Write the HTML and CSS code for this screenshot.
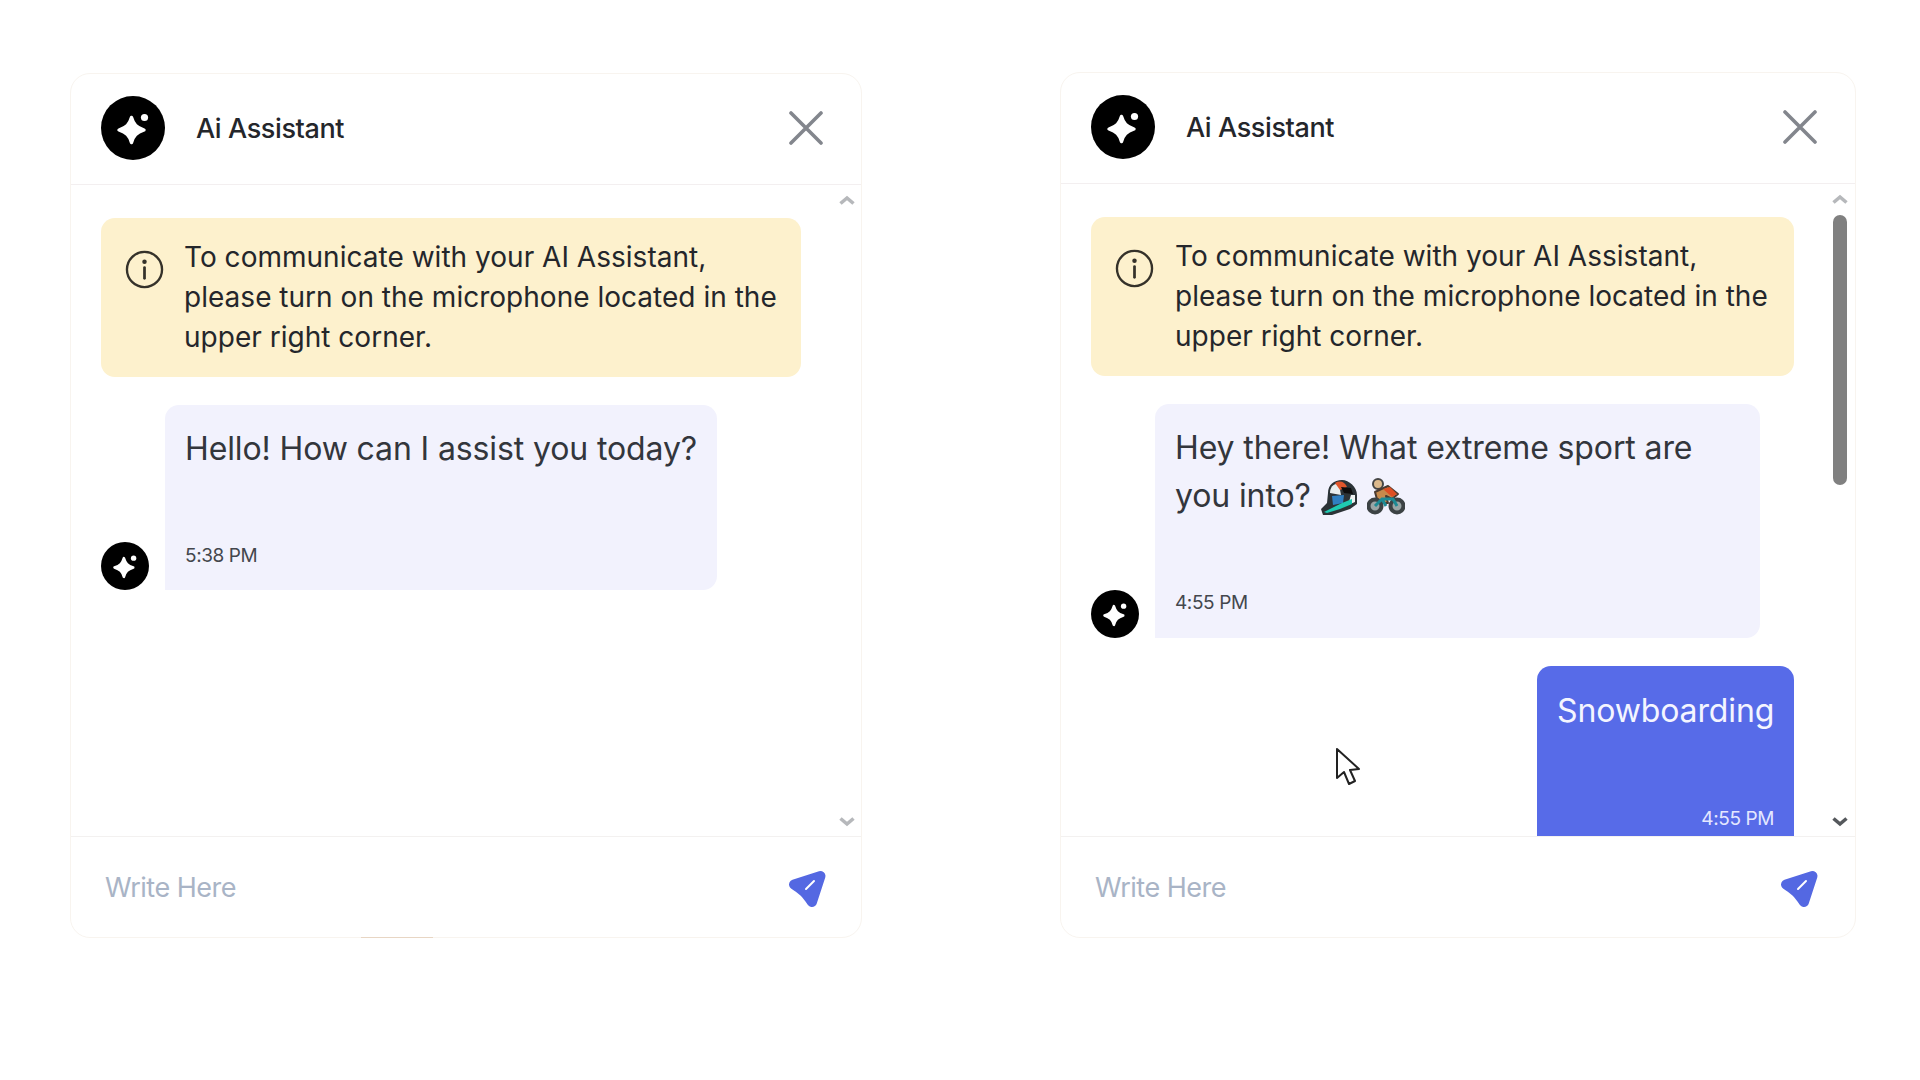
FILE: index.html
```html
<!DOCTYPE html>
<html lang="en">
  <head>
    <meta charset="UTF-8" />
    <meta name="viewport" content="width=device-width, initial-scale=1.0" />
    <title>Ai Assistant</title>
    <link rel="stylesheet" href="styles.css">
  </head>
  <body>
    <svg class="icon-defs" width="0" height="0">
      <symbol id="spark" viewBox="0 0 64 64">
        <circle cx="32" cy="32" r="32" fill="#000" />
        <path d="M30.5 21.5C32.5 28.5 35.5 31.5 43 34C35.5 36.5 32.5 39.5 30.5 46.5C28.5 39.5 25.5 36.5 18 34C25.5 31.5 28.5 28.5 30.5 21.5Z" fill="#fff" stroke="#fff" stroke-width="3.4" stroke-linejoin="round" />
        <circle cx="43.5" cy="21.5" r="3.6" fill="#fff" />
      </symbol>
      <symbol id="info" viewBox="0 0 40 40">
        <circle cx="20" cy="20" r="18" fill="none" stroke="#35322a" stroke-width="2.4" />
        <circle cx="20" cy="12" r="2.3" fill="#35322a" />
        <path d="M20 18V29" stroke="#35322a" stroke-width="2.8" stroke-linecap="round" />
      </symbol>
      <symbol id="close" viewBox="0 0 34 34">
        <path d="M2 2L32 32M32 2L2 32" stroke="#83868d" stroke-width="3.6" stroke-linecap="round" />
      </symbol>
      <symbol id="send" viewBox="0 0 42 40">
        <path d="M34.5 7L8 15.5C12 18 15 20 18 23C21 26 23.5 29.5 26 33Z" fill="#5468e2" stroke="#5468e2" stroke-width="10" stroke-linejoin="round" />
        <path d="M20 20L28 12" stroke="#fff" stroke-width="2" stroke-linecap="round" />
      </symbol>
      <symbol id="arrow-up" viewBox="0 0 16 10">
        <path d="M1.5 8.5L8 3L14.5 8.5" fill="none" stroke="currentColor" stroke-width="3.6" />
      </symbol>
      <symbol id="arrow-down" viewBox="0 0 16 10">
        <path d="M1.5 1.5L8 7L14.5 1.5" fill="none" stroke="currentColor" stroke-width="3.6" />
      </symbol>
    </svg>

    <div class="card card-a">
      <div class="card-head">
        <svg class="avatar"><use href="#spark" /></svg>
        <span class="card-title">Ai Assistant</span>
        <svg class="close-icon"><use href="#close" /></svg>
      </div>
      <div class="chat-area">
        <div class="notice">
          <svg class="info-icon"><use href="#info" /></svg>
          <p>To communicate with your AI Assistant, please turn on the microphone located in the upper right corner.</p>
        </div>
        <div class="row">
          <svg class="avatar-small"><use href="#spark" /></svg>
          <div class="bubble">
            <p>Hello! How can I assist you today?</p>
            <div class="time">5:38 PM</div>
          </div>
        </div>
        <div class="scroll-rail">
          <svg class="arrow arrow-light"><use href="#arrow-up" /></svg>
          <svg class="arrow arrow-light"><use href="#arrow-down" /></svg>
        </div>
      </div>
      <div class="card-foot">
        <input class="write-input" type="text" placeholder="Write Here" />
        <svg class="send-icon"><use href="#send" /></svg>
      </div>
    </div>

    <div class="card card-b">
      <div class="card-head">
        <svg class="avatar"><use href="#spark" /></svg>
        <span class="card-title">Ai Assistant</span>
        <svg class="close-icon"><use href="#close" /></svg>
      </div>
      <div class="chat-area">
        <div class="notice">
          <svg class="info-icon"><use href="#info" /></svg>
          <p>To communicate with your AI Assistant, please turn on the microphone located in the upper right corner.</p>
        </div>
        <div class="row">
          <svg class="avatar-small"><use href="#spark" /></svg>
          <div class="bubble bubble-wide">
            <p>Hey there! What extreme sport are you into?
              <svg class="emoji" viewBox="0 0 38 38">
                <path d="M8 15C8 7 14 2 22 2C29 2 37 9 37 17V26L30 31L12 37L3 37L1 31L7 25Z" fill="#2c3337" />
                <path d="M10 15C10 9 14 5 19 6L21 17Z" fill="#e8edee" />
                <path d="M15 5C20 2 25 4 27 9L20 12Z" fill="#e0562c" />
                <path d="M21 9L31 10L33 16L24 15Z" fill="#0d0d0d" />
                <path d="M31 17L35 17V24L28 27Z" fill="#eef1f1" />
                <path d="M12 18L24 17L23 25L13 27Z" fill="#2f7fc1" />
                <path d="M4 34L22 25L32 21L32 26L20 31L7 35Z" fill="#1fc9b2" />
              </svg>
              <svg class="emoji" viewBox="0 0 38 38">
                <circle cx="11" cy="6" r="5" fill="#dcb98c" stroke="#454545" stroke-width="2" />
                <path d="M8 14L21 8L31 16L25 21L19 18L21 25L11 25Z" fill="#c68a4c" stroke="#4a3a30" stroke-width="2" stroke-linejoin="round" />
                <path d="M16 11L23 9L30 16L25 19Z" fill="#dd4f24" />
                <circle cx="8" cy="28" r="6.5" fill="#9aa5a5" stroke="#3c4244" stroke-width="4" />
                <circle cx="30" cy="28" r="6.5" fill="#9aa5a5" stroke="#3c4244" stroke-width="4" />
                <path d="M8 28L15 21H26L30 28M15 21L19 28" fill="none" stroke="#1d8a94" stroke-width="3" />
              </svg>
            </p>
            <div class="time">4:55 PM</div>
          </div>
        </div>
        <div class="bubble bubble-user">
          <p>Snowboarding</p>
          <div class="time">4:55 PM</div>
        </div>
        <div class="scroll-rail">
          <svg class="arrow arrow-light"><use href="#arrow-up" /></svg>
          <div class="scroll-thumb"></div>
          <svg class="arrow arrow-dark"><use href="#arrow-down" /></svg>
        </div>
        <svg class="mouse-cursor" viewBox="0 0 26 40">
          <path d="M2 2V31L9 25L14 37L20 34L15 23L24 22Z" fill="#fff" stroke="#222" stroke-width="2" stroke-linejoin="round" />
        </svg>
      </div>
      <div class="card-foot">
        <input class="write-input" type="text" placeholder="Write Here" />
        <svg class="send-icon"><use href="#send" /></svg>
      </div>
    </div>
  </body>
</html>
```

FILE: styles.css
```css
body {
  font-family: Inter, "Liberation Sans", sans-serif;
  margin: 0;
  padding: 73px 64px 0 70px;
  height: 1080px;
  box-sizing: border-box;
  display: flex;
  justify-content: space-between;
  align-items: flex-start;
  background-color: #fff;
  color: #24262b;
  overflow: hidden;
}
p {
  margin: 0;
}
.icon-defs {
  position: absolute;
}
.card {
  position: relative;
  display: flex;
  flex-direction: column;
  box-sizing: border-box;
  width: 792px;
  height: 865px;
  background: #fff;
  border: 1px solid #f8f4ef;
  border-radius: 20px;
}
.card-a::after {
  content: "";
  position: absolute;
  left: 290px;
  bottom: -1px;
  width: 72px;
  height: 1px;
  background: #e8d6c4;
}
.card-b {
  width: 796px;
  height: 866px;
  margin-top: -1px;
}
.card-head {
  display: flex;
  align-items: center;
  flex: none;
  height: 108px;
  padding: 0 38px 2px 30px;
  border-bottom: 1px solid #f3eff0;
}
.avatar {
  width: 64px;
  height: 64px;
}
.card-title {
  flex: 1;
  margin-left: 31px;
  font-size: 27px;
  font-weight: 500;
  letter-spacing: -0.4px;
}
.close-icon {
  width: 34px;
  height: 34px;
}
.chat-area {
  position: relative;
  flex: 1;
  min-height: 0;
  padding: 33px 61px 0 30px;
  overflow: hidden;
}
.card-a .chat-area {
  padding-right: 60px;
}
.notice {
  display: flex;
  gap: 20px;
  padding: 19px 16px 20px 24px;
  background-color: #fdf1cd;
  border-radius: 14px;
  font-size: 28px;
  line-height: 40px;
  letter-spacing: 0.02px;
}
.card-b .notice p {
  margin-left: 1px;
}
.info-icon {
  flex: none;
  width: 39px;
  height: 39px;
  margin-top: 13px;
}
.row {
  display: flex;
  align-items: flex-end;
  gap: 16px;
  margin-top: 28px;
}
.avatar-small {
  flex: none;
  width: 48px;
  height: 48px;
}
.bubble {
  box-sizing: border-box;
  padding: 20px;
  background-color: #f2f2fd;
  border-radius: 14px 14px 14px 0;
  font-size: 32px;
  line-height: 48px;
  letter-spacing: -0.12px;
  color: #33363c;
}
.bubble-wide {
  width: 605px;
  padding-bottom: 21px;
}
.time {
  margin-top: 69px;
  font-size: 19px;
  line-height: 28px;
  letter-spacing: -0.4px;
  color: #44474d;
}
.bubble-user {
  width: 257px;
  margin: 28px 0 0 auto;
  padding-top: 21px;
  background-color: #576be8;
  color: #f4f5ff;
  white-space: nowrap;
  border-radius: 14px 14px 0 14px;
}
.bubble-user .time {
  margin-top: 70px;
  text-align: right;
  color: #e4e7ff;
}
.emoji {
  width: 38px;
  height: 38px;
  vertical-align: -9px;
}
.scroll-rail {
  position: absolute;
  top: 0;
  right: 0;
  bottom: 0;
  box-sizing: border-box;
  width: 30px;
  padding: 10px 0 9px;
  display: flex;
  flex-direction: column;
  align-items: center;
}
.card-a .scroll-rail {
  width: 28px;
}
.arrow {
  flex: none;
  width: 16px;
  height: 10px;
}
.arrow-light {
  color: #b6b8bb;
}
.arrow-dark {
  color: #55585c;
}
.arrow + .arrow,
.scroll-thumb + .arrow {
  margin-top: auto;
}
.scroll-thumb {
  width: 14px;
  height: 270px;
  margin-top: 11px;
  background-color: #808080;
  border-radius: 7px;
}
.mouse-cursor {
  position: absolute;
  left: 274px;
  top: 563px;
  width: 26px;
  height: 40px;
}
.card-foot {
  display: flex;
  align-items: center;
  flex: none;
  height: 100px;
  padding: 0 33px 0 34px;
  border-top: 1px solid #f3f1f0;
}
.card-b .card-foot {
  padding-right: 35px;
}
.write-input {
  flex: 1;
  border: none;
  outline: none;
  padding: 0;
  background: transparent;
  font-family: inherit;
  font-size: 27px;
  letter-spacing: -0.5px;
}
.write-input::placeholder {
  color: #a9b4c6;
  opacity: 1;
}
.send-icon {
  width: 42px;
  height: 40px;
  margin-top: 4px;
}
```
